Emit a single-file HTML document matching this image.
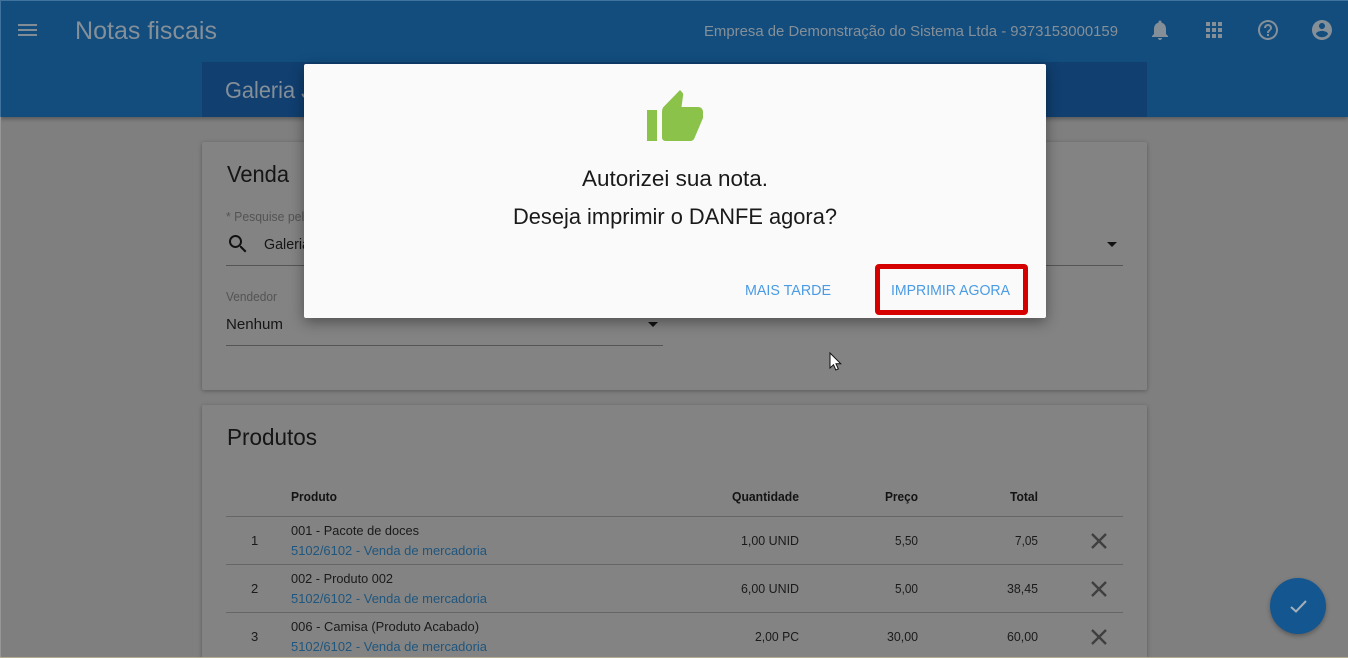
<!DOCTYPE html>
<html lang="pt-BR">
<head>
<meta charset="utf-8">
<title>Notas fiscais</title>
<style>
html,body{margin:0;padding:0;width:1348px;height:658px;overflow:hidden;background:#7f7f7f;}
body{position:relative;font-family:"Liberation Sans",sans-serif;}
.a{position:absolute;}
svg{position:absolute;left:0;top:0;}
text{font-family:"Liberation Sans",sans-serif;}
</style>
</head>
<body>
<div class="a" style="left:0;top:0;width:1348px;height:117px;background:#124d7e;box-shadow:0 2px 4px rgba(0,0,0,.3);"></div>
<div class="a" style="left:0;top:0;width:1348px;height:1px;background:#3f729c;"></div>
<div class="a" style="left:0;top:0;width:1px;height:117px;background:#3f729c;"></div>
<div class="a" style="left:0;top:117px;width:1px;height:541px;background:#979797;"></div>
<div class="a" style="left:202px;top:62px;width:945px;height:55px;background:#103f70;"></div>
<div class="a" style="left:202px;top:142px;width:945px;height:248px;background:#838383;border-radius:2px;box-shadow:0 1px 4px rgba(0,0,0,.3);"></div>
<div class="a" style="left:202px;top:405px;width:945px;height:270px;background:#838383;border-radius:2px;box-shadow:0 1px 4px rgba(0,0,0,.3);"></div>
<div class="a" style="left:226px;top:265px;width:897px;height:1px;background:#555;"></div>
<div class="a" style="left:226px;top:345px;width:437px;height:1px;background:#555;"></div>
<div class="a" style="left:226px;top:516px;width:897px;height:1px;background:#666;"></div>
<div class="a" style="left:226px;top:564px;width:897px;height:1px;background:#666;"></div>
<div class="a" style="left:226px;top:612px;width:897px;height:1px;background:#666;"></div>
<div class="a" style="left:0;top:657px;width:1348px;height:1px;background:#b5ac93;"></div>
<div class="a" style="left:1270px;top:578px;width:56px;height:56px;border-radius:50%;background:#14568f;box-shadow:0 2px 5px rgba(0,0,0,.3);"></div>

<svg width="1348" height="658" viewBox="0 0 1348 658">
  <!-- toolbar -->
  <path d="M18 24h19v2H18zM18 29h19v2H18zM18 34h19v2H18z" fill="#808c96"/>
  <g fill="#858f98">
    <text x="75" y="39" font-size="25" textLength="142" lengthAdjust="spacingAndGlyphs">Notas fiscais</text>
    <text x="704" y="36" font-size="15" textLength="414" lengthAdjust="spacingAndGlyphs">Empresa de Demonstração do Sistema Ltda - 9373153000159</text>
    <text x="225" y="98" font-size="23" textLength="87" lengthAdjust="spacingAndGlyphs">Galeria J</text>
  </g>
  <!-- bell -->
  <path transform="translate(1148 18)" fill="#858f98" d="M12 22c1.100 0 2-.9 2-2h-4c0 1.100.9 2 2 2zm6-6v-5c0-3.070-1.630-5.640-4.500-6.320V4c0-.83-.67-1.500-1.500-1.500s-1.500.67-1.500 1.500v.68C7.640 5.360 6 7.920 6 11v5l-2 2v1h16v-1l-2-2z"/>
  <!-- apps -->
  <path transform="translate(1202 18)" fill="#858f98" d="M4 8h4V4H4v4zm6 12h4v-4h-4v4zm-6 0h4v-4H4v4zm0-6h4v-4H4v4zm6 0h4v-4h-4v4zm6-10v4h4V4h-4zm-6 4h4V4h-4v4zm6 6h4v-4h-4v4zm0 6h4v-4h-4v4z"/>
  <!-- help -->
  <path transform="translate(1256 18)" fill="#858f98" d="M11 18h2v-2h-2v2zm1-16C6.480 2 2 6.480 2 12s4.480 10 10 10 10-4.480 10-10S17.520 2 12 2zm0 18c-4.410 0-8-3.590-8-8s3.590-8 8-8 8 3.590 8 8-3.590 8-8 8zm0-14c-2.210 0-4 1.790-4 4h2c0-1.100.9-2 2-2s2 .9 2 2c0 2-3 1.750-3 5h2c0-2.250 3-2.500 3-5 0-2.210-1.790-4-4-4z"/>
  <!-- account -->
  <path transform="translate(1310 18)" fill="#858f98" d="M12 2C6.480 2 2 6.480 2 12s4.480 10 10 10 10-4.480 10-10S17.520 2 12 2zm0 3c1.660 0 3 1.340 3 3s-1.340 3-3 3-3-1.340-3-3 1.340-3 3-3zm0 14.200c-2.500 0-4.710-1.280-6-3.220.03-1.990 4-3.080 6-3.080 1.990 0 5.970 1.090 6 3.080-1.290 1.940-3.500 3.220-6 3.220z"/>

  <!-- venda -->
  <text x="227" y="182" font-size="23" fill="#151515" textLength="62" lengthAdjust="spacingAndGlyphs">Venda</text>
  <text x="226" y="221" font-size="12.500" fill="#545454" textLength="85" lengthAdjust="spacingAndGlyphs">* Pesquise pelo</text>
  <path transform="translate(226 232)" fill="#111" d="M15.500 14h-.79l-.28-.27C15.410 12.590 16 11.110 16 9.500 16 5.910 13.090 3 9.500 3S3 5.910 3 9.500 5.910 16 9.500 16c1.610 0 3.090-.59 4.230-1.570l.27.28v.79l5 4.990L20.490 19l-4.990-5zm-6 0C7.010 14 5 11.990 5 9.500S7.010 5 9.500 5 14 7.010 14 9.500 11.990 14 9.500 14z"/>
  <text x="264" y="249" font-size="15" fill="#151515" textLength="46" lengthAdjust="spacingAndGlyphs">Galeria</text>
  <path d="M1107 242h10l-5 5z" fill="#111"/>
  <text x="226" y="301" font-size="12.500" fill="#545454" textLength="51" lengthAdjust="spacingAndGlyphs">Vendedor</text>
  <text x="226" y="329" font-size="15" fill="#151515" textLength="57" lengthAdjust="spacingAndGlyphs">Nenhum</text>
  <path d="M648 322h10l-5 5z" fill="#111"/>

  <!-- produtos -->
  <text x="227" y="445" font-size="23" fill="#151515" textLength="90" lengthAdjust="spacingAndGlyphs">Produtos</text>
  <g font-size="12.500" font-weight="bold" fill="#131313">
    <text x="291" y="501" textLength="46" lengthAdjust="spacingAndGlyphs">Produto</text>
    <text x="732" y="501" textLength="67" lengthAdjust="spacingAndGlyphs">Quantidade</text>
    <text x="885" y="501" textLength="33" lengthAdjust="spacingAndGlyphs">Preço</text>
    <text x="1010" y="501" textLength="28" lengthAdjust="spacingAndGlyphs">Total</text>
  </g>
  <g font-size="13" fill="#1a1a1a">
    <text x="251" y="545">1</text>
    <text x="251" y="593">2</text>
    <text x="251" y="641">3</text>
    <text x="291" y="535" textLength="128" lengthAdjust="spacingAndGlyphs">001 - Pacote de doces</text>
    <text x="291" y="583" textLength="102" lengthAdjust="spacingAndGlyphs">002 - Produto 002</text>
    <text x="291" y="631" textLength="188" lengthAdjust="spacingAndGlyphs">006 - Camisa (Produto Acabado)</text>
    <text x="741" y="545" textLength="58" lengthAdjust="spacingAndGlyphs">1,00 UNID</text>
    <text x="741" y="593" textLength="58" lengthAdjust="spacingAndGlyphs">6,00 UNID</text>
    <text x="755" y="641" textLength="44" lengthAdjust="spacingAndGlyphs">2,00 PC</text>
    <text x="895" y="545" textLength="23" lengthAdjust="spacingAndGlyphs">5,50</text>
    <text x="895" y="593" textLength="23" lengthAdjust="spacingAndGlyphs">5,00</text>
    <text x="887" y="641" textLength="31" lengthAdjust="spacingAndGlyphs">30,00</text>
    <text x="1015" y="545" textLength="23" lengthAdjust="spacingAndGlyphs">7,05</text>
    <text x="1007" y="593" textLength="31" lengthAdjust="spacingAndGlyphs">38,45</text>
    <text x="1007" y="641" textLength="31" lengthAdjust="spacingAndGlyphs">60,00</text>
  </g>
  <g font-size="13" fill="#1f567e">
    <text x="291" y="555" textLength="196" lengthAdjust="spacingAndGlyphs">5102/6102 - Venda de mercadoria</text>
    <text x="291" y="603" textLength="196" lengthAdjust="spacingAndGlyphs">5102/6102 - Venda de mercadoria</text>
    <text x="291" y="651" textLength="196" lengthAdjust="spacingAndGlyphs">5102/6102 - Venda de mercadoria</text>
  </g>
  <g stroke="#3f3f3f" stroke-width="2.400" fill="none">
    <path d="M1092 534l14 14M1106 534l-14 14"/>
    <path d="M1092 582l14 14M1106 582l-14 14"/>
    <path d="M1092 630l14 14M1106 630l-14 14"/>
  </g>
  <path d="M1291 607l5 4.500 10-10.500" stroke="#a3b0bb" stroke-width="2" fill="none"/>
</svg>

<div class="a" style="left:304px;top:64px;width:742px;height:254px;background:#fafafa;border-radius:2px;box-shadow:0 4px 14px rgba(0,0,0,.4);"></div>
<div class="a" style="left:875px;top:264px;width:143px;height:41px;border:5px solid #d50000;border-radius:4px;"></div>

<svg width="1348" height="658" viewBox="0 0 1348 658">
  <path d="M647 110h10v31h-10z" fill="#8bc34a"/>
  <path d="M662 112c0-2 .5-4 1.500-5L680 90l2.300 2.500c.7.800 1 1.700.8 2.700L681.500 107H698c3 0 5 2 5 5v6l-8.500 20c-.6 1.800-2.200 3-4 3H665.500c-2 0-3.500-1.500-3.500-3.500z" fill="#8bc34a"/>
  <text x="582" y="186" font-size="22.500" fill="#1a1a1a" textLength="186" lengthAdjust="spacingAndGlyphs">Autorizei sua nota.</text>
  <text x="513" y="224" font-size="22.500" fill="#1a1a1a" textLength="324" lengthAdjust="spacingAndGlyphs">Deseja imprimir o DANFE agora?</text>
  <text x="745" y="295" font-size="15" fill="#4a9be3" textLength="86" lengthAdjust="spacingAndGlyphs">MAIS TARDE</text>
  <text x="891" y="295" font-size="15" fill="#4a9be3" textLength="119" lengthAdjust="spacingAndGlyphs">IMPRIMIR AGORA</text>
  <path d="M830 353v15l3.500-3.300 2.300 5.300 2.500-1.100-2.300-5.200h4.700z" fill="#fff" stroke="#111" stroke-width="1"/>
</svg>
</body>
</html>
